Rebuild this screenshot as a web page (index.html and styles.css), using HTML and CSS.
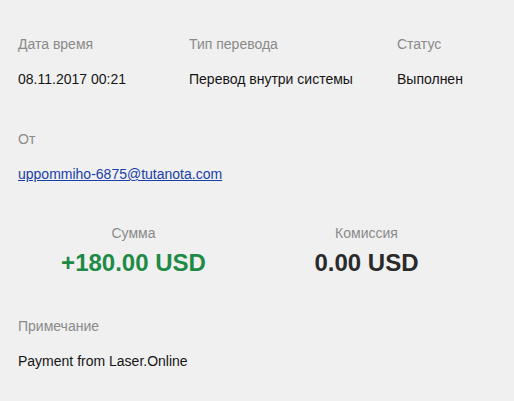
FILE: index.html
```html
<!DOCTYPE html>
<html>
<head>
<meta charset="utf-8">
<link rel="stylesheet" href="styles.css">
</head>
<body>
<div class="page">
  <div class="grid3">
    <div class="label">Дата время</div>
    <div class="label">Тип перевода</div>
    <div class="label">Статус</div>
    <div class="value">08.11.2017 00:21</div>
    <div class="value">Перевод внутри системы</div>
    <div class="value">Выполнен</div>
  </div>
  <div class="block from">
    <div class="label">От</div>
    <div class="value"><a class="link" href="#">uppommiho-6875@tutanota.com</a></div>
  </div>
  <div class="sums">
    <div class="sum">
      <div class="label">Сумма</div>
      <div class="amount plus">+180.00 USD</div>
    </div>
    <div class="sum">
      <div class="label">Комиссия</div>
      <div class="amount">0.00 USD</div>
    </div>
  </div>
  <div class="block note">
    <div class="label">Примечание</div>
    <div class="value">Payment from Laser.Online</div>
  </div>
</div>
</body>
</html>
```
FILE: styles.css
```css
html, body {
  margin: 0;
  padding: 0;
  background: #f0f0f0;
}
body {
  font-family: "Liberation Sans", Arial, sans-serif;
  font-size: 14px;
  line-height: 16px;
  color: #222;
}
.page {
  padding: 36px 18px 0 18px;
}
.grid3 {
  display: grid;
  grid-template-columns: 171px 208px auto;
  row-gap: 19px;
}
.label {
  color: #8a8a8a;
}
.value {
  color: #151515;
}
.block {
  display: flex;
  flex-direction: column;
  gap: 19px;
}
.from {
  margin-top: 44px;
}
.link {
  color: #1a3fa8;
  text-decoration: underline;
}
.sums {
  display: grid;
  grid-template-columns: 233px 233px;
  margin: 43px 0 0 -1px;
}
.sum {
  display: flex;
  flex-direction: column;
  align-items: center;
  gap: 8px;
}
.amount {
  font-weight: bold;
  font-size: 24px;
  line-height: 28px;
  color: #2a2a2a;
}
.amount.plus {
  color: #1e8a46;
}
.note {
  margin-top: 41px;
}
```
